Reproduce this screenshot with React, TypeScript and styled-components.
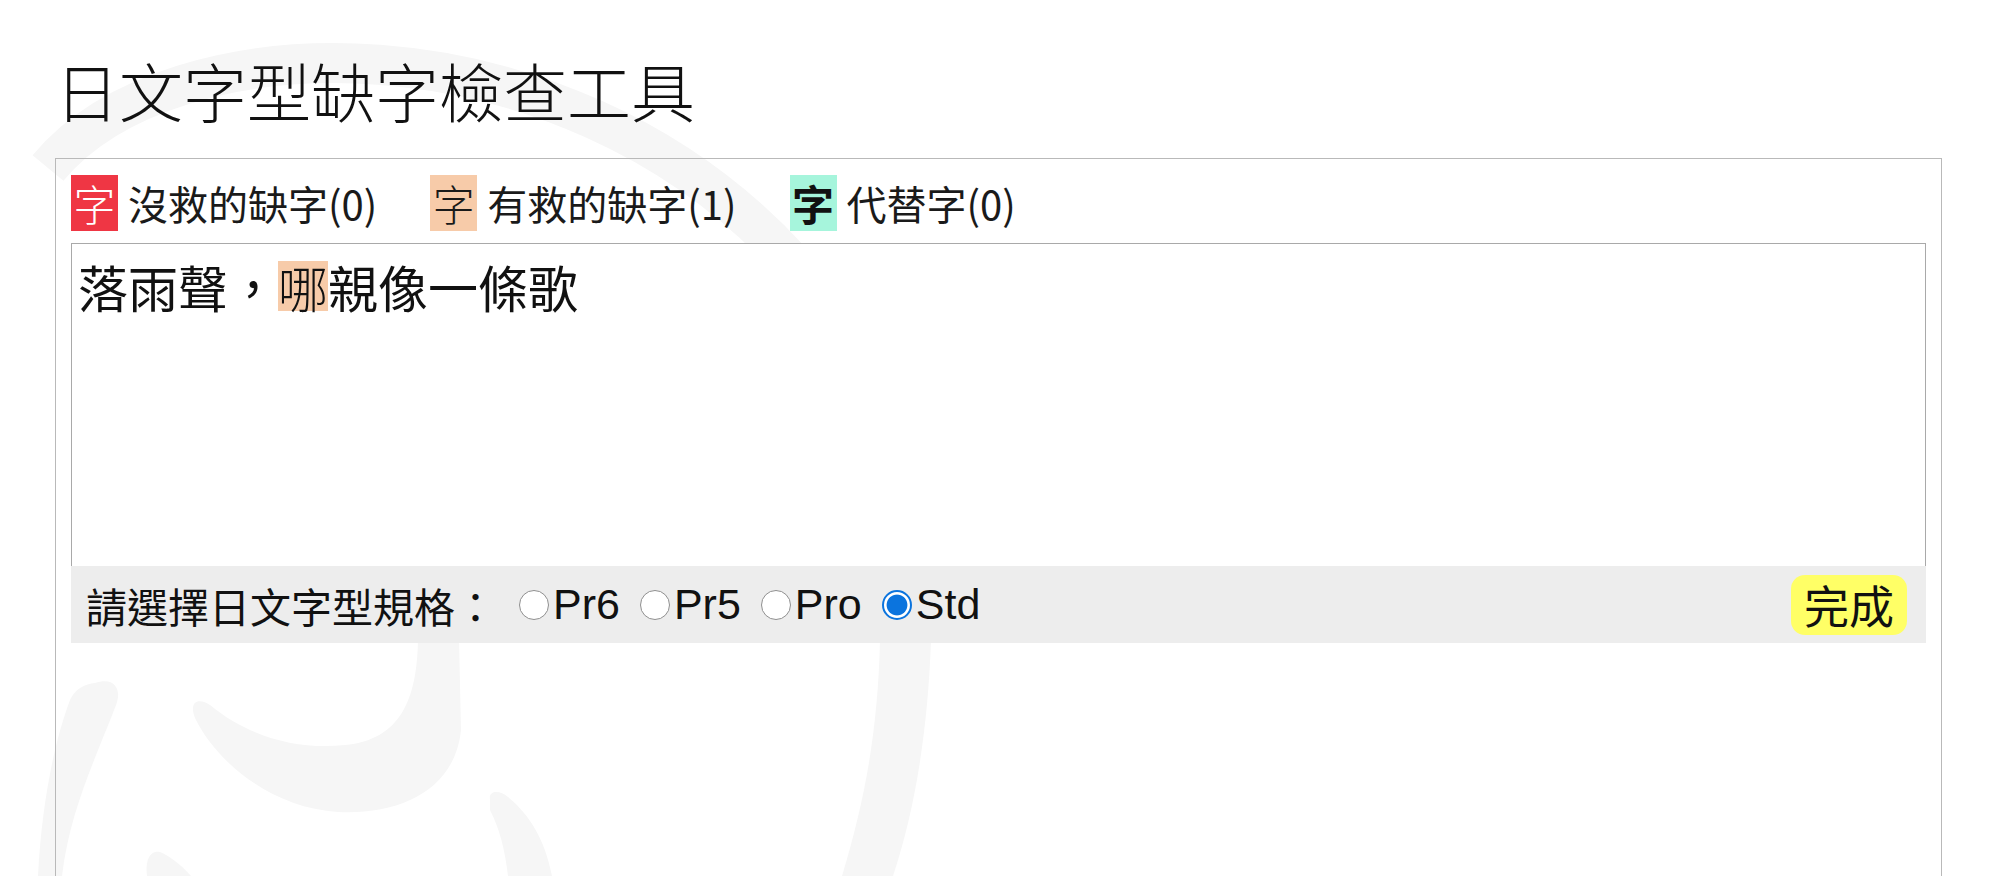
import React, { useState } from "react";
import styled, { createGlobalStyle } from "styled-components";

const GlobalStyle = createGlobalStyle`
  html, body {
    margin: 0;
    padding: 0;
    background: #ffffff;
  }
  body {
    font-family: "Noto Sans CJK TC", "Noto Sans", sans-serif;
    color: #111111;
    overflow: hidden;
  }
`;

const Page = styled.div`
  position: relative;
  box-sizing: border-box;
  min-height: 876px;
  padding: 57px 58px 0 55px;
`;

const Watermark = styled.svg`
  position: absolute;
  left: 0;
  top: 0;
  width: 2000px;
  height: 876px;
  z-index: 0;
  pointer-events: none;
`;

const Content = styled.div`
  position: relative;
  z-index: 1;
`;

const Title = styled.h1`
  margin: 0 0 37px 0;
  font-size: 64px;
  line-height: 64px;
  font-weight: 300;
  color: #111111;
`;

const Panel = styled.section`
  box-sizing: border-box;
  width: 1887px;
  min-height: 760px;
  border: 1px solid #b9b9b9;
  padding: 16px 15px 0 15px;
`;

const Legend = styled.div`
  display: flex;
  align-items: center;
  gap: 53px;
  height: 56px;
  margin-bottom: 12px;
`;

const LegendItem = styled.div`
  display: flex;
  align-items: center;
  gap: 10px;
  font-size: 40px;
  line-height: 56px;
  font-weight: 400;
  color: #1a1a1a;
`;

const Swatch = styled.span<{ $bg: string; $fg: string; $weight: number }>`
  display: flex;
  align-items: center;
  justify-content: center;
  width: 47px;
  height: 56px;
  background: ${(p) => p.$bg};
  color: ${(p) => p.$fg};
  font-size: 42px;
  line-height: 1;
  font-weight: ${(p) => p.$weight};
`;

const Editor = styled.div`
  box-sizing: border-box;
  height: 323px;
  border: 1px solid #a9a9a9;
  border-bottom: none;
  background: #ffffff;
  padding: 17px 6px;
  font-size: 50px;
  line-height: 50px;
  font-weight: 400;
  color: #111111;
`;

const Mark = styled.span`
  display: inline-block;
  background: #f7cba9;
  font-weight: 300;
`;

const Toolbar = styled.div`
  display: flex;
  align-items: center;
  height: 77px;
  background: #ededed;
  padding: 0 19px 0 15px;
`;

const ToolbarLabel = styled.span`
  font-size: 41px;
  font-weight: 400;
  color: #111111;
`;

const RadioGroup = styled.div`
  display: flex;
  align-items: center;
  gap: 20px;
  margin-left: 23px;
`;

const RadioLabel = styled.label`
  display: flex;
  align-items: center;
  gap: 4px;
  font-family: "Liberation Sans", "Noto Sans CJK TC", sans-serif;
  font-size: 43px;
  color: #111111;
  cursor: pointer;
`;

const RadioInput = styled.input`
  appearance: none;
  -webkit-appearance: none;
  box-sizing: border-box;
  flex: none;
  width: 30px;
  height: 30px;
  margin: 0;
  border-radius: 50%;
  border: 1px solid #8f8f8f;
  background: #ffffff;
  cursor: pointer;

  &:checked {
    border: 2px solid #0b74de;
    background: radial-gradient(circle, #0b74de 0 54%, #ffffff 59%);
  }
`;

const DoneButton = styled.button`
  margin-left: auto;
  height: 60px;
  padding: 0 13px;
  border: none;
  border-radius: 14px;
  background: #ffff66;
  font-family: "Noto Sans CJK TC", sans-serif;
  font-size: 45px;
  line-height: 1;
  color: #111111;
  cursor: pointer;
`;

const legend = [
  { bg: "#ef3644", fg: "#ffffff", weight: 300, label: "沒救的缺字(0)" },
  { bg: "#f7cba9", fg: "#1a1a1a", weight: 300, label: "有救的缺字(1)" },
  { bg: "#a6f5dc", fg: "#111111", weight: 700, label: "代替字(0)" },
];

const specs = ["Pr6", "Pr5", "Pro", "Std"];

export default function App() {
  const [spec, setSpec] = useState("Std");
  return (
    <>
      <GlobalStyle />
      <Page>
        <Watermark viewBox="0 0 2000 876" aria-hidden="true">
          <g fill="#f6f6f6" stroke="none">
            <path d="M 48 168 C 170 20, 560 10, 790 260" fill="none" stroke="#f6f6f6" strokeWidth="40" />
            <path d="M 95 683 C 115 676, 122 690, 116 705 C 95 760, 70 810, 62 876 L 38 876 C 42 800, 55 740, 70 700 C 76 688, 85 684, 95 683 Z" />
            <path d="M 418 640 L 459 640 L 461 730 C 455 790, 400 815, 338 812 C 270 808, 215 760, 195 718 C 188 700, 200 698, 210 705 C 250 738, 300 750, 345 745 C 400 740, 417 700, 418 640 Z" />
            <path d="M 490 800 C 488 790, 500 790, 508 797 C 530 815, 545 840, 552 876 L 508 876 C 505 850, 500 830, 490 810 Z" />
            <path d="M 147 876 C 145 860, 150 850, 160 852 C 170 856, 182 866, 191 876 Z" />
            <path d="M 880 640 L 931 640 C 928 730, 915 810, 893 876 L 842 876 C 865 800, 878 730, 880 640 Z" />
          </g>
        </Watermark>
        <Content>
          <Title>日文字型缺字檢查工具</Title>
          <Panel>
            <Legend>
              {legend.map((l) => (
                <LegendItem key={l.label}>
                  <Swatch $bg={l.bg} $fg={l.fg} $weight={l.weight}>字</Swatch>
                  <span>{l.label}</span>
                </LegendItem>
              ))}
            </Legend>
            <Editor>
              落雨聲，<Mark>哪</Mark>親像一條歌
            </Editor>
            <Toolbar>
              <ToolbarLabel>請選擇日文字型規格：</ToolbarLabel>
              <RadioGroup>
                {specs.map((s) => (
                  <RadioLabel key={s}>
                    <RadioInput
                      type="radio"
                      name="spec"
                      value={s}
                      checked={spec === s}
                      onChange={() => setSpec(s)}
                    />
                    {s}
                  </RadioLabel>
                ))}
              </RadioGroup>
              <DoneButton type="button">完成</DoneButton>
            </Toolbar>
          </Panel>
        </Content>
      </Page>
    </>
  );
}
